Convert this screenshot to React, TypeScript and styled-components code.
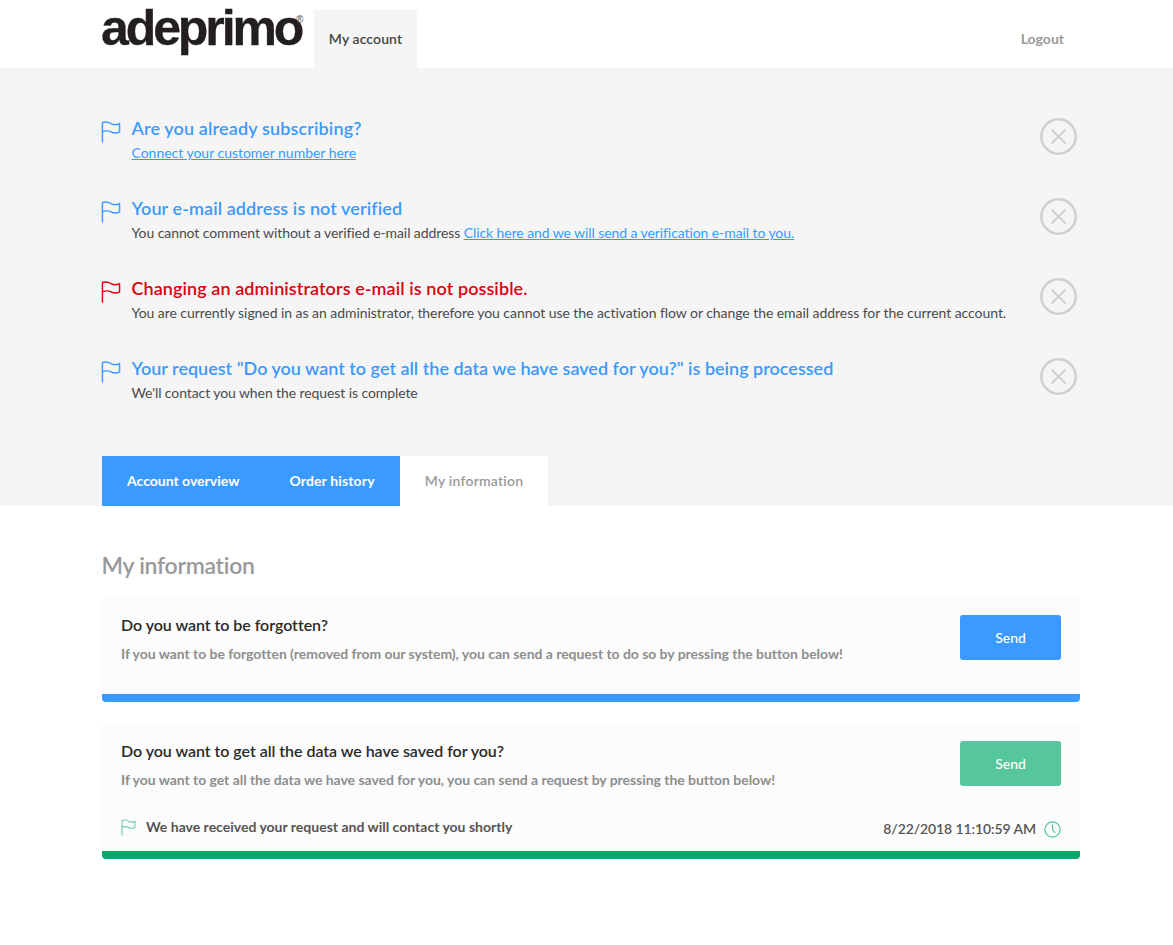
import React from "react";
import styled, { createGlobalStyle } from "styled-components";

const Global = createGlobalStyle`
  html, body { margin: 0; padding: 0; background: #fff; }
  body { font-family: Lato, "Open Sans", sans-serif; color: #444; }
  * { box-sizing: border-box; }
`;

const Page = styled.div`
  width: 1173px;
  min-height: 945px;
  background: #fff;
`;
const Header = styled.header`
  height: 68px;
  padding: 10px 109px 0 102px;
  display: flex;
  align-items: stretch;
`;
const Logo = styled.div`
  width: 213px;
  margin-left: -1px;
  position: relative;
  font-family: "Liberation Sans", Arial, sans-serif;
  font-weight: 700;
  font-size: 50px;
  line-height: 37px;
  letter-spacing: -3.1px;
  color: #231f20;
  white-space: nowrap;
  -webkit-text-stroke: 0.3px #231f20;
`;
const Registered = styled.span`
  position: absolute;
  left: 195px;
  top: 6px;
  font-size: 10px;
  line-height: 8px;
  font-weight: 400;
  letter-spacing: 0;
  -webkit-text-stroke: 0;
  color: #555;
`;
const AccountTab = styled.div`
  width: 103px;
  background: #f5f5f5;
  display: flex;
  align-items: center;
  justify-content: center;
  font-size: 14px;
  font-weight: 600;
  letter-spacing: 0.1px;
  color: #444;
  padding-bottom: 1px;
`;
const Logout = styled.div`
  margin-left: auto;
  align-self: center;
  font-size: 14px;
  font-weight: 700;
  color: #999;
  padding-bottom: 1px;
`;
const Band = styled.section`
  background: #f5f5f5;
  height: 438px;
  padding: 40px 96px 0 101px;
  display: flex;
  flex-direction: column;
  justify-content: space-between;
`;
const Notices = styled.div`
  display: flex;
  flex-direction: column;
`;
const Notice = styled.div`
  height: 80px;
  display: flex;
  align-items: flex-start;
`;
const FlagBox = styled.div`
  width: 30.5px;
  padding-top: 13px;
  flex: none;
  line-height: 0;
`;
const NoticeBody = styled.div`
  flex: 1;
  padding-top: 8px;
`;
const NoticeTitle = styled.div<{ $color: string; $track: number }>`
  font-size: 18px;
  line-height: 24px;
  font-weight: 600;
  letter-spacing: ${(p) => p.$track}px;
  color: ${(p) => p.$color};
`;
const NoticeText = styled.div<{ $track: number }>`
  font-size: 14px;
  line-height: 20px;
  margin-top: 3px;
  letter-spacing: ${(p) => p.$track}px;
  color: #4a4a4a;
`;
const Link = styled.a`
  color: #3b9aff;
  text-decoration: underline;
`;
const CloseBox = styled.div`
  flex: none;
  padding-top: 10px;
  line-height: 0;
`;
const Tabs = styled.nav`
  margin-left: 1px;
  display: flex;
  height: 50px;
`;
const Tab = styled.div<{ $active?: boolean; $track?: number }>`
  display: flex;
  align-items: center;
  padding: 0 25px 2px;
  font-size: 14px;
  font-weight: ${(p) => (p.$active ? 600 : 700)};
  letter-spacing: ${(p) => p.$track ?? 0}px;
  background: ${(p) => (p.$active ? "#fff" : "#3b9aff")};
  color: ${(p) => (p.$active ? "#999" : "#fff")};
`;
const Content = styled.main`
  padding: 45px 93px 0 102px;
`;
const Heading = styled.h2`
  margin: 0 0 18px -0.5px;
  font-size: 23px;
  line-height: 28px;
  font-weight: 600;
  letter-spacing: -0.27px;
  color: #999;
`;
const Card = styled.article<{ $bar: string }>`
  background: #fcfcfc;
  border-bottom: 8px solid ${(p) => p.$bar};
  border-radius: 4px;
  margin-bottom: 21px;
  padding: 18px 19px 0;
`;
const CardTop = styled.div`
  display: flex;
  justify-content: space-between;
  align-items: flex-start;
`;
const CardTitle = styled.h3`
  margin: 0;
  font-size: 16px;
  line-height: 20px;
  font-weight: 600;
  letter-spacing: -0.04px;
  color: #2a2a2a;
`;
const CardText = styled.p`
  margin: 9px 0 0;
  font-size: 14px;
  line-height: 20px;
  font-weight: 700;
  letter-spacing: -0.045px;
  color: #8e8e8e;
`;
const SendButton = styled.button<{ $bg: string }>`
  width: 101px;
  height: 45px;
  border: 0;
  border-radius: 3px;
  background: ${(p) => p.$bg};
  color: #fff;
  font-family: inherit;
  font-size: 14px;
  font-weight: 500;
  padding: 0;
`;
const FirstSpacer = styled.div`
  height: 30px;
`;
const Status = styled.div`
  display: flex;
  align-items: center;
  height: 22px;
  margin-top: 26px;
  margin-bottom: 13px;
`;
const StatusText = styled.span`
  margin: 0 0 2px 10px;
  font-size: 14px;
  font-weight: 700;
  color: #555;
`;
const Timestamp = styled.span`
  margin: 2px 0 0 auto;
  font-size: 14px;
  font-weight: 600;
  letter-spacing: -0.1px;
  color: #555;
  display: flex;
  align-items: center;
  gap: 8px;
`;
const ClockIcon = styled.svg`
  margin-top: 2px;
`;

const Flag = ({ color, w = 20, h = 22, sw = 1.5 }: { color: string; w?: number; h?: number; sw?: number }) => (
  <svg width={w} height={h} viewBox="0 0 21 23" fill="none" stroke={color} strokeWidth={sw} strokeLinejoin="round" strokeLinecap="round">
    <path d="M1.5 22 L1.5 1.5 C5 0.6 8 1 10.5 2.6 C13.5 4.4 16.5 4.2 19.5 2.6 L19.5 11.4 C16.5 13 13.5 13 10.5 11.4 C8 10 5 10 1.5 11.2" />
  </svg>
);

const Close = () => (
  <svg width="37" height="37" viewBox="0 0 37 37" fill="none" stroke="#cfcfcf">
    <circle cx="18.5" cy="18.5" r="17.2" strokeWidth="2.4" />
    <path d="M11.5 11.5 L25.5 25.5 M25.5 11.5 L11.5 25.5" strokeWidth="1.8" />
  </svg>
);

const Clock = () => (
  <ClockIcon width="17" height="17" viewBox="0 0 17 17" fill="none" stroke="#55c59a" strokeWidth="1.2" strokeLinecap="round">
    <circle cx="8.5" cy="8.5" r="7.6" />
    <path d="M8.5 3.8 L8.5 8.8 L11 11.6" />
  </ClockIcon>
);

const notices = [
  {
    color: "#3b9aff",
    title: "Are you already subscribing?",
    titleTrack: 0.14,
    textTrack: -0.02,
    text: <Link>Connect your customer number here</Link>,
  },
  {
    color: "#3b9aff",
    title: "Your e-mail address is not verified",
    titleTrack: 0.09,
    textTrack: -0.085,
    text: (
      <>
        You cannot comment without a verified e-mail address <Link>Click here and we will send a verification e-mail to you.</Link>
      </>
    ),
  },
  {
    color: "#dd0011",
    title: "Changing an administrators e-mail is not possible.",
    titleTrack: 0.08,
    textTrack: -0.055,
    text: "You are currently signed in as an administrator, therefore you cannot use the activation flow or change the email address for the current account.",
  },
  {
    color: "#3b9aff",
    title: 'Your request "Do you want to get all the data we have saved for you?" is being processed',
    titleTrack: 0,
    textTrack: -0.09,
    text: "We'll contact you when the request is complete",
  },
];

export default function App() {
  return (
    <Page>
      <Global />
      <Header>
        <Logo>
          adeprimo
          <Registered>®</Registered>
        </Logo>
        <AccountTab>My account</AccountTab>
        <Logout>Logout</Logout>
      </Header>
      <Band>
        <Notices>
          {notices.map((n) => (
            <Notice key={n.title}>
              <FlagBox>
                <Flag color={n.color} />
              </FlagBox>
              <NoticeBody>
                <NoticeTitle $color={n.color} $track={n.titleTrack}>{n.title}</NoticeTitle>
                <NoticeText $track={n.textTrack}>{n.text}</NoticeText>
              </NoticeBody>
              <CloseBox>
                <Close />
              </CloseBox>
            </Notice>
          ))}
        </Notices>
        <Tabs>
          <Tab>Account overview</Tab>
          <Tab $track={0.15}>Order history</Tab>
          <Tab $active $track={0.22}>My information</Tab>
        </Tabs>
      </Band>
      <Content>
        <Heading>My information</Heading>
        <Card $bar="#3b9aff">
          <CardTop>
            <div>
              <CardTitle>Do you want to be forgotten?</CardTitle>
              <CardText>If you want to be forgotten (removed from our system), you can send a request to do so by pressing the button below!</CardText>
            </div>
            <SendButton $bg="#3b9aff">Send</SendButton>
          </CardTop>
          <FirstSpacer />
        </Card>
        <Card $bar="#00a86b">
          <CardTop>
            <div>
              <CardTitle>Do you want to get all the data we have saved for you?</CardTitle>
              <CardText>If you want to get all the data we have saved for you, you can send a request by pressing the button below!</CardText>
            </div>
            <SendButton $bg="#55c79b">Send</SendButton>
          </CardTop>
          <Status>
            <Flag color="#6fd0ae" w={15} h={17} sw={1.6} />
            <StatusText>We have received your request and will contact you shortly</StatusText>
            <Timestamp>
              8/22/2018 11:10:59 AM
              <Clock />
            </Timestamp>
          </Status>
        </Card>
      </Content>
    </Page>
  );
}
